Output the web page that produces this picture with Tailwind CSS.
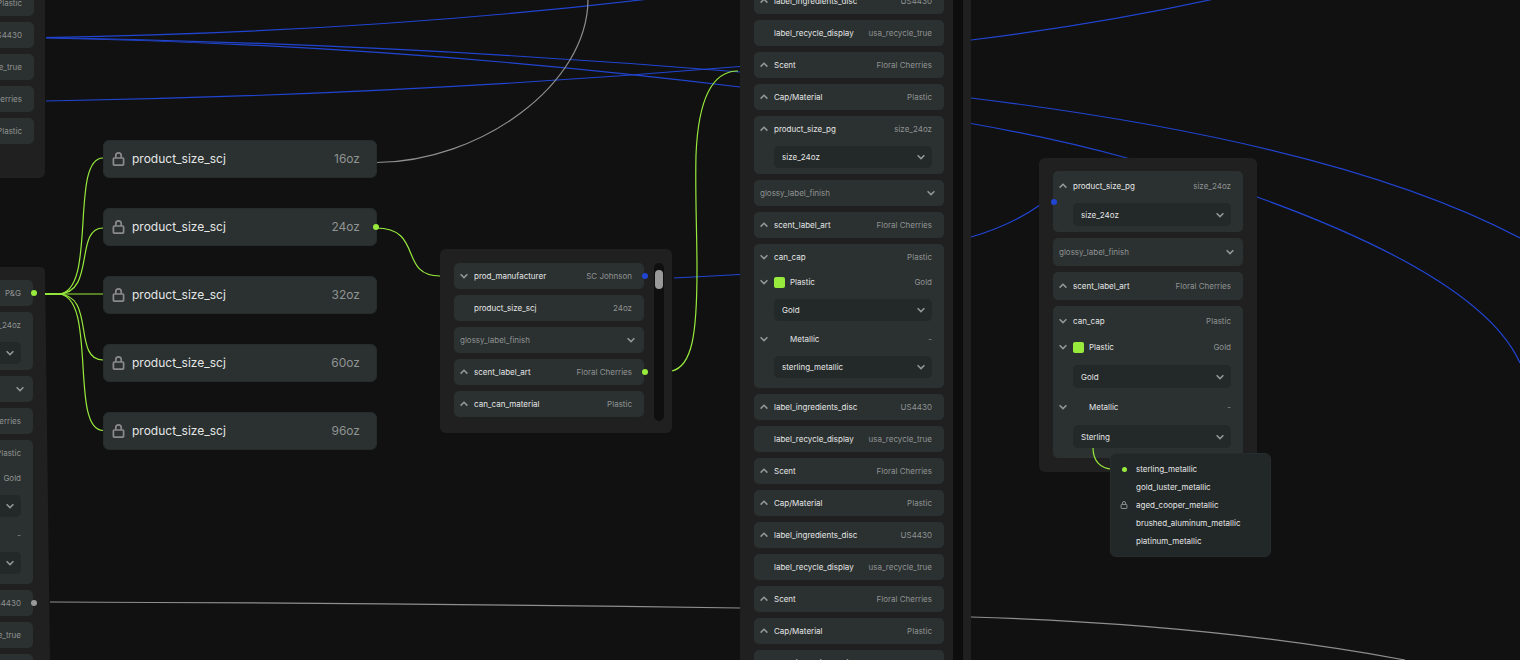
<!DOCTYPE html>
<html lang="en">
<head>
    <meta charset="UTF-8">
    <meta name="viewport" content="width=device-width, initial-scale=1.0">
    <title>Node Canvas</title>
    <script src="https://cdn.jsdelivr.net/npm/@tailwindcss/browser@4"></script>
</head>
<body class="bg-[#111111] font-['Inter',sans-serif] text-[#e4e6e6]">

    <!-- Shared icons -->
    <svg class="hidden" aria-hidden="true">
        <symbol id="icon-down" viewBox="0 0 8 8"><path d="M.6 2.200 4 5.600l3.400-3.400" fill="none" stroke="currentColor" stroke-width="1.500"/></symbol>
        <symbol id="icon-up" viewBox="0 0 8 8"><path d="M.6 5.600 4 2.200l3.400 3.400" fill="none" stroke="currentColor" stroke-width="1.500"/></symbol>
        <symbol id="icon-lock" viewBox="0 0 12 14"><path d="M1.800 6h8.400q.9 0 .9 1v5.200q0 .9-.9.9H1.800q-.9 0-.9-.9V7q0-1 .9-1zM3.300 6V3.600a2.700 2.700 0 0 1 5.400 0V6" fill="none" stroke="currentColor" stroke-width="1.700"/></symbol>
    </svg>

    <main class="relative h-screen w-full overflow-hidden">

        <!-- Wires -->
        <svg class="absolute inset-0 h-full w-full" fill="none" aria-hidden="true">
            <path d="M0 267H40Q45 267 45 272L50 660V2000H0Z" fill="#202020"/>
            <g stroke="#2145d3" stroke-width="1.200">
                <path d="M46 37.500Q370 32 649 -1"/>
                <path d="M46 37.500Q400 44 740 72"/>
                <path d="M46 38Q400 45 740 87"/>
                <path d="M46 101Q400 95 740 66.500"/>
                <path d="M674 278L740 274.500Q905 263 971 237Q1010 226 1040 205"/>
                <path d="M971 40Q1100 24 1214 -1"/>
                <path d="M971 98Q1340 143 1520 238"/>
                <path d="M971 123.500Q1054 138 1127 158Q1200 176 1257 197Q1482 278 1520 363"/>
            </g>
            <g stroke="#8f8f8f" stroke-width="1.200">
                <path d="M376 162.500C480 162 588 85 588 -1"/>
                <path d="M50 602Q400 603 740 608L971 617Q1210 624 1405 660"/>
            </g>
            <g stroke="#98ea3c" stroke-width="1.200">
                <path d="M45 294H58C98 294 69 158 103 158"/>
                <path d="M45 294H58C96 294 74 228 103 228"/>
                <path d="M45 294H103"/>
                <path d="M45 294H58C96 294 72 360 103 360"/>
                <path d="M45 294H58C98 294 69 430.500 103 430.500"/>
                <path d="M376 228C424 228 398 276 440 276"/>
                <path d="M672 371C692 366 697 335 697 270C697 230 695 195 696 155C698 105 709 71 738 71"/>
            </g>
        </svg>

        <!-- Left panels, running off the canvas edge -->
        <section class="absolute -left-16 -top-3 w-[109px] rounded-md bg-[#202020] pb-[34px] pr-[11px]">
            <div data-rows="leftTop" class="flex flex-col gap-[6px] pt-[2px]"></div>
        </section>
        <section class="absolute -left-16 top-[267px] w-[97px] pt-[13px]">
            <div data-rows="leftBottom" class="flex flex-col gap-[6px]"></div>
        </section>

        <!-- Size nodes -->
        <section id="size-nodes" class="absolute left-[103px] top-[140px] flex w-[274px] flex-col gap-[30px]"></section>

        <!-- SC Johnson node -->
        <section class="absolute left-[440px] top-[249px] flex w-[232px] rounded-md bg-[#202020] pb-3 pl-[14px] pr-2 pt-[14px]">
            <div data-rows="manufacturer" class="flex w-[190px] flex-col gap-[6px] pb-1"></div>
            <div class="ml-[10px] w-[10px] rounded-full bg-[#0f0f0f] px-px pt-[7px]">
                <div class="h-[19px] rounded-full bg-[#999999]"></div>
            </div>
        </section>

        <!-- Full height list -->
        <section class="absolute inset-y-0 left-[740px] flex w-[231px] overflow-hidden bg-[#202020]">
            <div data-rows="center" class="-mt-3 ml-[14px] flex w-[190px] flex-col gap-[6px]"></div>
            <div class="ml-[9px] w-[10px] bg-[#0d0d0d]"></div>
        </section>

        <!-- P&G node -->
        <section class="absolute left-[1039px] top-[158px] w-[218px] rounded-md bg-[#202020] px-[14px] pb-[14px] pt-[13px]">
            <div data-rows="right" class="flex flex-col gap-[6px]"></div>
        </section>

        <!-- Metallic menu -->
        <svg class="absolute left-[1092px] top-[448px] h-[22px] w-[20px]" fill="none" aria-hidden="true">
            <path d="M1 0C1 13 9 21 20 21" stroke="#98ea3c" stroke-width="1.200"/>
        </svg>
        <ul class="absolute left-[1110px] top-[453px] w-[161px] rounded-md border border-[#272c2c] bg-[#222727] py-[6px] text-[8px] leading-[18px]">
            <li><button class="flex w-full items-center px-[9px]"><span class="mr-2 flex w-2 justify-center"><span class="size-[5px] rounded-full bg-[#98ea3c]"></span></span>sterling_metallic</button></li>
            <li><button class="w-full pl-[25px] text-left">gold_luster_metallic</button></li>
            <li><button class="flex w-full items-center px-[9px]"><svg class="mr-2 size-2 text-[#8f9393]"><use href="#icon-lock"/></svg>aged_cooper_metallic</button></li>
            <li><button class="w-full pl-[25px] text-left">brushed_aluminum_metallic</button></li>
            <li><button class="w-full pl-[25px] text-left">platinum_metallic</button></li>
        </ul>
    </main>

    <script>
        const dotColors = { green: 'bg-[#98ea3c]', blue: 'bg-[#2145d3]', gray: 'bg-[#999999]' };

        // Row heights: the P&G node is a little roomier than the others
        const compact = { row: 'h-[26px]', select: 'h-[22px]', first: 'mt-1 mb-[6px]', head: 'h-[26px]', sub: 'h-6', gold: 'mt-[5px]', metal: 'h-[35px]', end: 'mb-[10px]' };
        const roomy = { row: 'h-7', select: 'h-[23px]', first: 'mt-[3px] mb-[6px]', head: 'h-[29px]', sub: 'h-6', gold: 'mt-[6px]', metal: 'h-[37px]', end: 'mb-[10px]' };

        const icon = (name) => `<svg class="size-2 shrink-0 text-[#949898]">${name ? `<use href="#icon-${name}"/>` : ''}</svg>`;

        const dot = (color, side = '-right-1') => color ? `<span class="absolute ${side} top-1/2 size-[6px] -translate-y-1/2 rounded-full ${dotColors[color]}"></span>` : '';

        // Header line: chevron, label and value
        function line(chevron, label, value, height, extra = '') {
            return `<button class="flex w-full items-center pl-[6px] pr-3 ${height}">
                ${label ? icon(chevron) : ''}${label ? `<span class="ml-[6px] flex items-center">${extra}${label}</span>` : ''}
                <span class="ml-auto whitespace-nowrap text-[#8f9393]">${value}</span>
            </button>`;
        }

        function row(chevron, label, value, color, size = compact) {
            return `<div class="relative rounded-[5px] bg-[#2b3030]">${line(chevron, label, value, size.row)}${dot(color)}</div>`;
        }

        function select(value, size, margin) {
            return `<div class="relative ml-5 mr-3 ${margin}">
                <select aria-label="Option" class="block w-full appearance-none rounded-[5px] bg-[#232828] pl-2 ${size.select}"><option>${value}</option></select>
                <span class="pointer-events-none absolute inset-y-0 right-[7px] flex items-center">${icon('down')}</span>
            </div>`;
        }

        function finish(label, size = compact) {
            return `<div class="relative">
                <select aria-label="Label finish" class="block w-full appearance-none rounded-[5px] bg-[#2b3030] pl-[6px] text-[#8f9393] ${size.row}"><option>${label}</option></select>
                <span class="pointer-events-none absolute inset-y-0 right-[9px] flex items-center">${icon('down')}</span>
            </div>`;
        }

        function sizeGroup(label, option, size = compact, color) {
            return `<div class="relative flow-root rounded-[5px] bg-[#2b3030]">${line('up', label, 'size_24oz', size.head)}${select(option, size, size.first)}${dot(color, '-left-[2px]')}</div>`;
        }

        function capGroup(labels, options, size = compact) {
            const swatch = '<span class="mr-[5px] size-[11px] rounded-[2px] bg-[#98ea3c]"></span>';
            const blank = '<span class="mr-[5px] w-[11px]"></span>';
            return `<div class="flow-root rounded-[5px] bg-[#2b3030]">
                ${line('down', labels[0], 'Plastic', size.head)}
                ${line('down', labels[1], 'Gold', size.sub, swatch)}
                ${select(options[0], size, size.gold)}
                ${line('down', labels[2], '-', size.metal, blank)}
                ${select(options[1], size, size.end)}
            </div>`;
        }

        const fourRows = () => row('up', 'label_ingredients_disc', 'US4430')
            + row('', 'label_recycle_display', 'usa_recycle_true')
            + row('up', 'Scent', 'Floral Cherries')
            + row('up', 'Cap/Material', 'Plastic');

        const lists = {
            leftTop: row('', '', 'Plastic') + row('', '', 'US4430') + row('', '', 'usa_recycle_true') + row('', '', 'Floral Cherries') + row('', '', 'Plastic'),
            leftBottom: row('', '', 'P&amp;G', 'green') + sizeGroup('', '') + finish('') + row('', '', 'Floral Cherries')
                + capGroup(['', '', ''], ['', '']) + row('', '', 'US4430', 'gray') + row('', '', 'usa_recycle_true') + row('', '', 'Floral Cherries'),
            manufacturer: row('down', 'prod_manufacturer', 'SC Johnson', 'blue') + row('', 'product_size_scj', '24oz') + finish('glossy_label_finish')
                + row('up', 'scent_label_art', 'Floral Cherries', 'green') + row('up', 'can_can_material', 'Plastic'),
            center: fourRows() + sizeGroup('product_size_pg', 'size_24oz') + finish('glossy_label_finish') + row('up', 'scent_label_art', 'Floral Cherries')
                + capGroup(['can_cap', 'Plastic', 'Metallic'], ['Gold', 'sterling_metallic']) + fourRows() + fourRows() + row('up', 'label_ingredients_disc', 'US4430'),
            right: sizeGroup('product_size_pg', 'size_24oz', roomy, 'blue') + finish('glossy_label_finish', roomy)
                + row('up', 'scent_label_art', 'Floral Cherries', '', roomy) + capGroup(['can_cap', 'Plastic', 'Metallic'], ['Gold', 'Sterling'], roomy),
        };

        document.querySelectorAll('[data-rows]').forEach((el) => {
            el.classList.add('text-[8px]', 'leading-3');
            el.innerHTML = lists[el.dataset.rows];
        });

        document.getElementById('size-nodes').innerHTML = ['16oz', '24oz', '32oz', '60oz', '96oz'].map((size) => `
            <button class="relative flex h-[38px] items-center rounded-md border border-[#262b2b] bg-[#2b3030] pl-2 pr-4 text-[12px] leading-5">
                <svg class="mr-[7px] h-[14px] w-[13px] text-[#8b8b8b]"><use href="#icon-lock"/></svg>
                product_size_scj
                <span class="ml-auto text-[#8f9393]">${size}</span>
                ${dot(size === '24oz' ? 'green' : '', '-right-[3px]')}
            </button>`).join('');
    </script>

</body>
</html>
